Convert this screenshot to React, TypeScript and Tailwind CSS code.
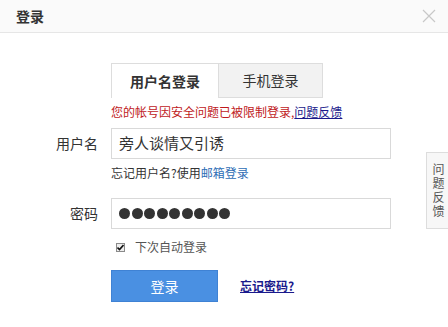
const cjk = "font-['Noto_Sans_CJK_SC','Noto_Sans',sans-serif]"

export default function App() {
  return (
    <div className={`relative w-[448px] h-[327px] bg-white overflow-hidden ${cjk}`}>
      <div className="h-[33px] bg-[#fafafa] border-b border-[#e6e6e6] flex items-center justify-between pl-4 pr-2">
        <span className="text-[14px] font-bold text-[#333]">登录</span>
        <svg width="14" height="14" viewBox="0 0 14 14" className="mr-1">
          <path d="M1 1 L13 13 M13 1 L1 13" stroke="#c8c8c8" strokeWidth="1.2" />
        </svg>
      </div>

      <div className="pl-[111px] pt-[30px]">
        <div className="flex h-[35px] w-[212px]">
          <div className="w-[107px] border-l border-t border-[#ddd] bg-white flex items-center justify-center text-[14px] font-bold text-[#333]">
            用户名登录
          </div>
          <div className="w-[105px] border border-[#ddd] bg-[#f2f2f2] flex items-center justify-center text-[14px] text-[#333]">
            手机登录
          </div>
        </div>
        <div className="mt-[6px] text-[12px] leading-[16px] text-[#c0191c]">
          您的帐号因安全问题已被限制登录,<a className="text-[#1a1a8c] underline">问题反馈</a>
        </div>
      </div>

      <div className="mt-[8px] flex items-center">
        <div className="w-[111px] pr-[13px] text-right text-[14px] text-[#333]">用户名</div>
        <div className="w-[280px] h-[31px] border border-[#d9d9d9] flex items-center pl-[7px] text-[15px] text-[#333]">
          旁人谈情又引诱
        </div>
      </div>
      <div className="pl-[111px] mt-[6px] text-[12px] leading-[16px] text-[#333]">
        忘记用户名?使用<span className="text-[#2d6db5]">邮箱登录</span>
      </div>

      <div className="mt-[17px] flex items-center">
        <div className="w-[111px] pr-[13px] text-right text-[14px] text-[#333]">密码</div>
        <div className="w-[280px] h-[31px] border border-[#d9d9d9] flex items-center gap-[1.5px] pl-[7px]">
          {Array.from({ length: 9 }).map((_, i) => (
            <span key={i} className="w-[11px] h-[11px] rounded-full bg-[#333]" />
          ))}
        </div>
      </div>

      <div className="pl-[116px] mt-[9px] flex items-center gap-[10px] text-[12px] text-[#555]">
        <span className="w-[9px] h-[9px] border border-[#8a8a8a] bg-[#eee] flex items-center justify-center">
          <svg width="7" height="7" viewBox="0 0 7 7">
            <path d="M0.5 3.5 L2.5 5.5 L6.5 1" stroke="#111" strokeWidth="1.6" fill="none" />
          </svg>
        </span>
        下次自动登录
      </div>

      <div className="pl-[111px] mt-[14px] flex items-center">
        <button className="w-[107px] h-[32px] bg-[#4a90e2] border border-[#3f82d4] text-white text-[14px]">
          登录
        </button>
        <a className="ml-[22px] text-[12px] font-bold text-[#1a1a8c] underline">忘记密码?</a>
      </div>

      <div className="absolute left-[426px] top-[152px] w-[30px] h-[77px] border border-[#ddd] bg-[#f7f7f7] flex items-center justify-start pl-[4px]">
        <span className="[writing-mode:vertical-rl] text-[12px] leading-[14px] tracking-[2px] text-[#555]">
          问题反馈
        </span>
      </div>
    </div>
  )
}
